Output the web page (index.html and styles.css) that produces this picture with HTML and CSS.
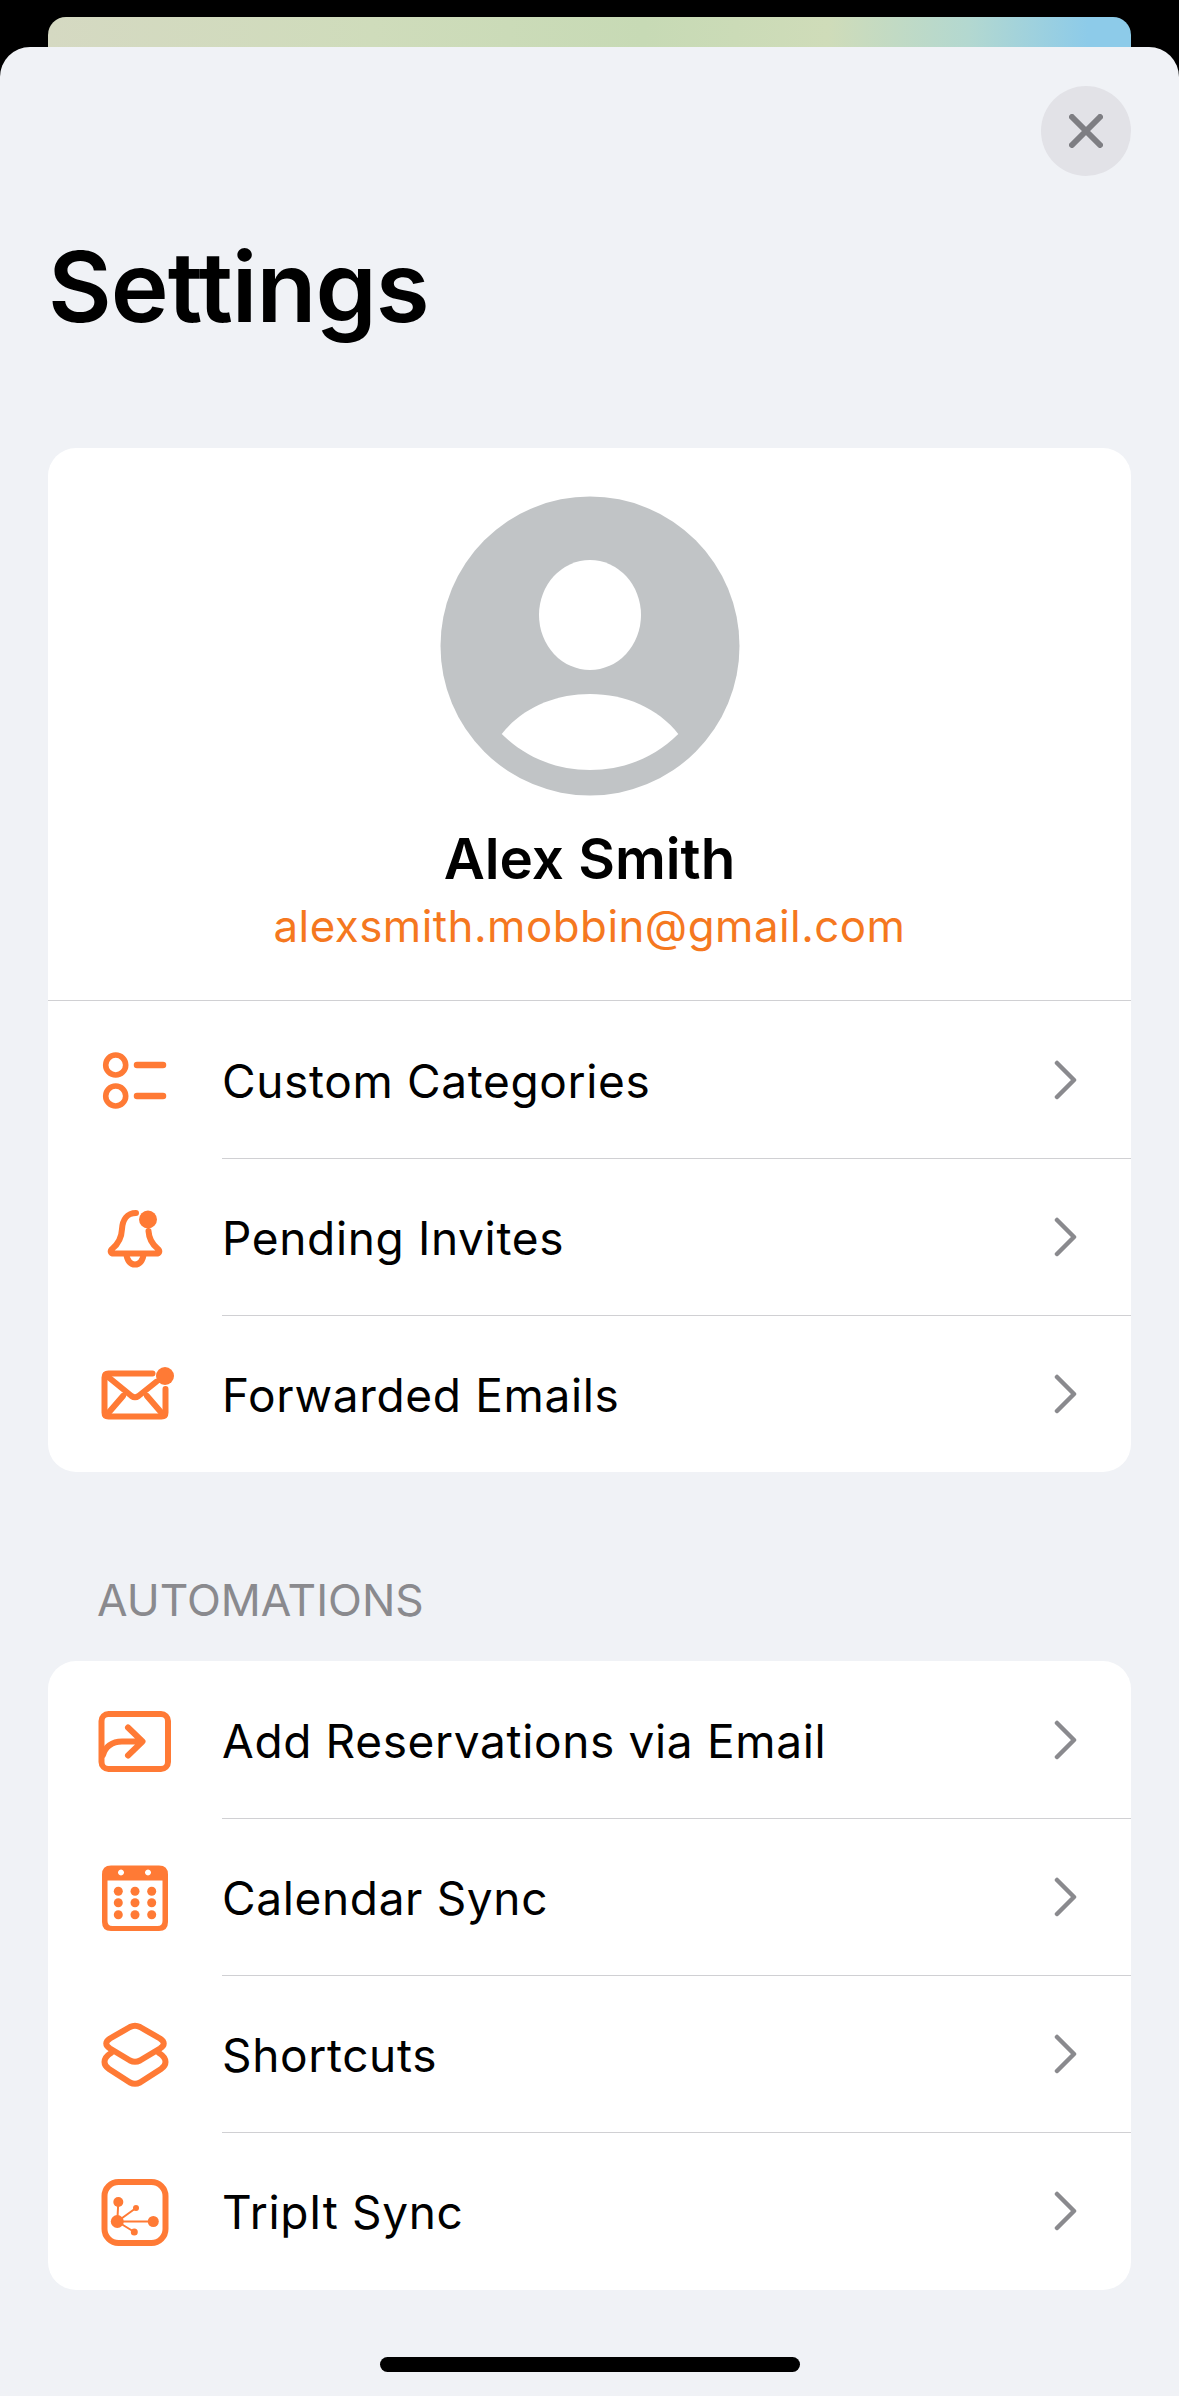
FILE: index.html
```html
<!DOCTYPE html>
<html lang="en">
<head>
<meta charset="utf-8">
<title>Settings</title>
<link rel="stylesheet" href="styles.css">
</head>
<body>
<div class="page">
  <div class="back-card"></div>
  <main class="sheet">
    <div class="sheet-head">
      <button class="close" aria-label="Close">
        <svg class="close-x" viewBox="0 0 34 34"><path d="M3 3 L31 31 M31 3 L3 31"/></svg>
      </button>
    </div>
    <h1 class="title">Settings</h1>

    <section class="card">
      <div class="profile">
        <svg class="avatar" viewBox="0 0 300 300">
          <circle cx="150" cy="150" r="149.5" fill="#c1c4c6"/>
          <ellipse cx="150" cy="119" rx="51" ry="55" fill="#fff"/>
          <path d="M61.7 238 C82 212 115 198 150 198 C185 198 218 212 238.3 238 C215 261 185 274 150 274 C115 274 85 261 61.7 238 Z" fill="#fff"/>
        </svg>
        <div class="name">Alex Smith</div>
        <div class="email">alexsmith.mobbin@gmail.com</div>
      </div>

      <div class="row row-first">
        <svg class="icon" viewBox="0 0 90 90">
          <circle cx="25.7" cy="30" r="10"/><circle cx="25.7" cy="61" r="10"/>
          <path class="thick" d="M47 30 H73 M47 61 H73"/>
        </svg>
        <div class="row-main"><span class="label">Custom Categories</span><svg class="chev" viewBox="0 0 24 40"><path d="M3 3 L20 20 L3 37"/></svg></div>
      </div>

      <div class="row">
        <svg class="icon icon-heavy" viewBox="0 0 90 90">
          <path d="M46 21 C37 21 32.5 28 32 37 C31.5 47 28 52 22.5 56.5 C19.5 59 20.5 61.5 24 61.5 H66 C69.5 61.5 70.5 59 67.5 56.5 C62 52 59 47 58.5 39"/>
          <path d="M36.5 62 C37 76 53 76 53.5 62"/>
          <circle class="solid" cx="58" cy="27.5" r="9"/>
        </svg>
        <div class="row-main"><span class="label">Pending Invites</span><svg class="chev" viewBox="0 0 24 40"><path d="M3 3 L20 20 L3 37"/></svg></div>
      </div>

      <div class="row">
        <svg class="icon icon-heavy" viewBox="0 0 90 90">
          <path d="M62.5 24.5 H18.5 Q14.5 24.5 14.5 28.5 V63.5 Q14.5 67.5 18.5 67.5 H71.5 Q75.5 67.5 75.5 63.5 V40"/>
          <path d="M17 27 L41.5 47 Q45 49.5 48.5 47 L66 33 M17 65.5 L33 47 M73 65.5 L57 47"/>
          <circle class="solid" cx="75" cy="27" r="9"/>
        </svg>
        <div class="row-main"><span class="label">Forwarded Emails</span><svg class="chev" viewBox="0 0 24 40"><path d="M3 3 L20 20 L3 37"/></svg></div>
      </div>
    </section>

    <h2 class="section-label">AUTOMATIONS</h2>

    <section class="card card-auto">
      <div class="row row-first">
        <svg class="icon icon-heavy" viewBox="0 0 90 90">
          <rect x="11.5" y="19" width="66.5" height="55" rx="7"/>
          <path d="M38 32.5 L52.5 46.5 L38 60.5 M52 46.5 H32 C22 46.5 15 52 13 60"/>
        </svg>
        <div class="row-main"><span class="label">Add Reservations via Email</span><svg class="chev" viewBox="0 0 24 40"><path d="M3 3 L20 20 L3 37"/></svg></div>
      </div>

      <div class="row">
        <svg class="icon" viewBox="0 0 90 90">
          <path class="solid" fill-rule="evenodd" d="M21 13.5 H69 Q78 13.5 78 22.5 V70 Q78 79 69 79 H21 Q12 79 12 70 V22.5 Q12 13.5 21 13.5 Z M17.5 28.5 V69 Q17.5 74 22.5 74 H67.5 Q72.5 74 72.5 69 V28.5 Z M31 17.5 a3 3 0 1 0 0.01 0 Z M58 17.5 a3 3 0 1 0 0.01 0 Z"/>
          <g class="solid">
            <circle cx="28.3" cy="39.2" r="4.5"/><circle cx="45" cy="39.2" r="4.5"/><circle cx="61.7" cy="39.2" r="4.5"/>
            <circle cx="28.3" cy="50.8" r="4.5"/><circle cx="45" cy="50.8" r="4.5"/><circle cx="61.7" cy="50.8" r="4.5"/>
            <circle cx="28.3" cy="62.8" r="4.5"/><circle cx="45" cy="62.8" r="4.5"/><circle cx="61.7" cy="62.8" r="4.5"/>
          </g>
        </svg>
        <div class="row-main"><span class="label">Calendar Sync</span><svg class="chev" viewBox="0 0 24 40"><path d="M3 3 L20 20 L3 37"/></svg></div>
      </div>

      <div class="row">
        <svg class="icon icon-heavy" viewBox="0 0 90 90">
          <path d="M40 18 Q45 15.5 50 18 L70 29.5 Q77.5 34.5 70 39.5 L50 51.5 Q45 54 40 51.5 L20 39.5 Q12.5 34.5 20 29.5 Z"/>
          <path d="M21 44 Q14.5 48 14.5 53 Q14.5 57 19 60 L40 73.5 Q45 76 50 73.5 L71 60 Q75.5 57 75.5 53 Q75.5 48 69 44"/>
        </svg>
        <div class="row-main"><span class="label">Shortcuts</span><svg class="chev" viewBox="0 0 24 40"><path d="M3 3 L20 20 L3 37"/></svg></div>
      </div>

      <div class="row">
        <svg class="icon icon-heavy" viewBox="0 0 90 90">
          <rect x="14.5" y="16" width="61" height="61" rx="14"/>
          <path class="thin" d="M27.3 55.5 L28.3 36 M27.3 55.5 H63.3 M27.3 55.5 L46 42 M27.3 55.5 L44.3 66"/>
          <g class="solid">
            <circle cx="27.3" cy="55.5" r="6.5"/><circle cx="28.3" cy="36" r="5"/><circle cx="63.3" cy="55.5" r="5.5"/>
            <circle cx="46" cy="42" r="3"/><circle cx="44.3" cy="66" r="3.5"/>
          </g>
        </svg>
        <div class="row-main"><span class="label">TripIt Sync</span><svg class="chev" viewBox="0 0 24 40"><path d="M3 3 L20 20 L3 37"/></svg></div>
      </div>
    </section>

    <div class="home-bar"></div>
  </main>
</div>
</body>
</html>
```

FILE: styles.css
```css
* { box-sizing: border-box; }
html, body { margin: 0; padding: 0; background: #000; }
body { font-family: Inter, "Liberation Sans", sans-serif; color: #000; }
.page { width: 1179px; height: 2396px; padding-top: 17px; overflow: hidden; display: flex; flex-direction: column; }
.back-card {
  height: 30px; margin: 0 48px; flex: none;
  border-radius: 18px 18px 0 0;
  background: linear-gradient(90deg, #d5d9c2 0%, #cfdcbb 30%, #c7dab5 55%, #cfdcb9 72%, #b3d8d0 85%, #8dcbe9 96%);
}
.sheet { flex: 1; background: #f0f2f6; border-radius: 30px 30px 0 0; padding: 39px 48px 0; }
.sheet-head { display: flex; justify-content: flex-end; }
.close { width: 90px; height: 90px; border: 0; padding: 0; border-radius: 50%; background: #e2e2e7; display: flex; align-items: center; justify-content: center; }
.close-x { width: 34px; height: 34px; display: block; }
.close-x path { fill: none; stroke: #7e7e83; stroke-width: 6; stroke-linecap: round; }
.title { margin: 51px 0 101px; font-size: 98px; line-height: 120px; font-weight: 600; letter-spacing: -1px; }
.card { background: #fff; border-radius: 28px; overflow: hidden; }
.card-auto { padding-bottom: 1px; }
.profile { height: 553px; padding-top: 48px; display: flex; flex-direction: column; align-items: center; border-bottom: 1px solid #d0d0d3; }
.avatar { width: 300px; height: 300px; display: block; flex: none; }
.name { margin-top: 31px; font-size: 56.5px; line-height: 64px; font-weight: 600; }
.email { margin-top: 11px; font-size: 43.8px; line-height: 50px; color: #f5781f; letter-spacing: 0.5px; }
.row { height: 157px; display: flex; align-items: center; padding-left: 42px; }
.icon { width: 90px; height: 90px; flex: none; display: block; margin-right: 42px; fill: none; stroke: #ff7a35; stroke-width: 5.6; stroke-linecap: round; stroke-linejoin: round; }
.icon-heavy { stroke-width: 6; }
.icon .solid { fill: #ff7a35; stroke: none; }
.icon .thick { stroke-width: 6.5; }
.icon .thin { stroke-width: 2; }
.row-main { flex: 1; align-self: stretch; display: flex; align-items: center; justify-content: space-between; padding-right: 53px; border-top: 1px solid #d0d0d3; }
.row-first .row-main { border-top: 0; }
.label { font-size: 46px; line-height: 56px; letter-spacing: 0.65px; padding-top: 2px; }
.chev { width: 24px; height: 40px; display: block; fill: none; stroke: #8a8a8e; stroke-width: 4.5; stroke-linecap: round; stroke-linejoin: round; }
.section-label { margin: 100px 0 33px 49px; font-size: 44.3px; line-height: 56px; font-weight: 400; color: #8a8a8e; }
.home-bar { width: 420px; height: 15px; margin: 67px auto 0; border-radius: 8px; background: #000; }
```
